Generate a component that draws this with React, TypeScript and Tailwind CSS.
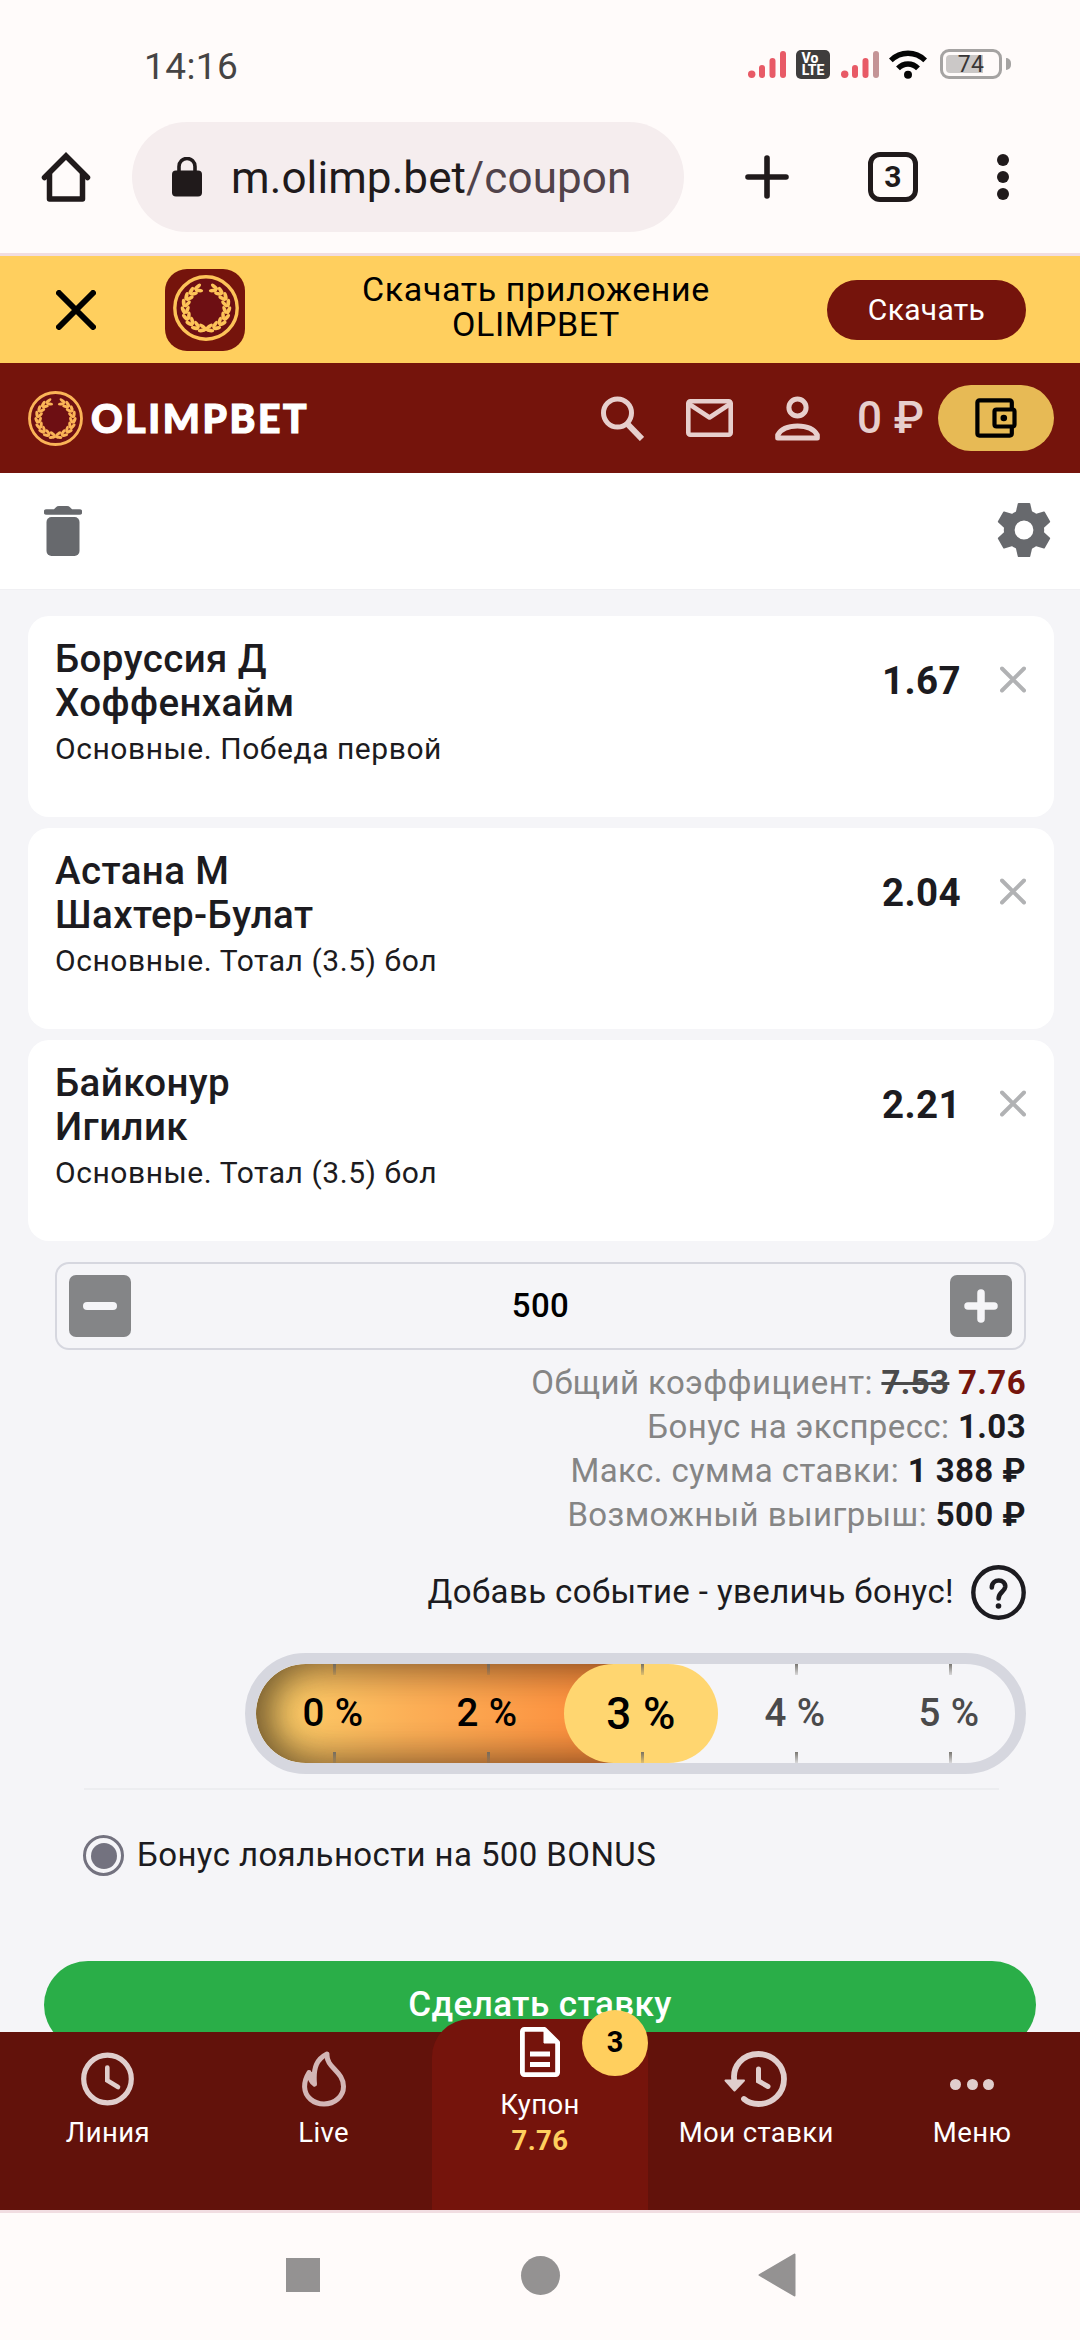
import { useState, type ReactNode } from "react";
import { clsx } from "clsx";

type Bet = { id: number; home: string; away: string; market: string; odds: string };

const BETS: Bet[] = [
    { id: 1, home: "Боруссия Д", away: "Хоффенхайм", market: "Основные. Победа первой", odds: "1.67" },
    { id: 2, home: "Астана М", away: "Шахтер-Булат", market: "Основные. Тотал (3.5) бол", odds: "2.04" },
    { id: 3, home: "Байконур", away: "Игилик", market: "Основные. Тотал (3.5) бол", odds: "2.21" },
];

const BONUS_STEPS = [0, 2, 3, 4, 5];
const ACTIVE_STEP = 2;

const LEAVES = [0, 1, 2, 3, 4, 5, 6, 7, 8];

// Half of the laurel wreath, mirrored for the other side
function Branch() {
    return (
        <g>
            <path d="M36 56.500L30 53.500" stroke="currentColor" strokeWidth="1.2" />
            {LEAVES.map((i) => {
                const deg = 100 + i * 18.5;
                const a = (deg * Math.PI) / 180;
                const ox = 33 + 22.8 * Math.cos(a);
                const oy = 33 + 22.8 * Math.sin(a);
                const ix = 33 + 18.8 * Math.cos(a);
                const iy = 33 + 18.8 * Math.sin(a);
                return (
                    <g key={i}>
                        <ellipse cx={ox} cy={oy} rx="4.3" ry="1.9" transform={`rotate(${deg + 72} ${ox} ${oy})`} />
                        <ellipse cx={ix} cy={iy} rx="4.2" ry="1.8" transform={`rotate(${deg + 118} ${ix} ${iy})`} />
                    </g>
                );
            })}
        </g>
    );
}

function Emblem({ size, color }: { size: number; color: string }) {
    return (
        <svg width={size} height={size} viewBox="0 0 66 66" fill={color} color={color}>
            <circle cx="33" cy="33" r="31.2" fill="#6d0f13" stroke={color} strokeWidth="3.4" />
            <Branch />
            <g transform="matrix(-1 0 0 1 66 0)">
                <Branch />
            </g>
        </svg>
    );
}

function Signal({ weak }: { weak?: boolean }) {
    return (
        <svg width="38" height="27" viewBox="0 0 38 27" fill="#e85a66">
            <circle cx="3.7" cy="23.3" r="3.7" />
            <rect x="11" y="14" width="6" height="13" rx="3" />
            <rect x="21.5" y="7" width="6" height="20" rx="3" />
            <rect x="32" y="0" width="6" height="27" rx="3" fill={weak ? "#c49496" : "#e85a66"} />
        </svg>
    );
}

function StatusBar() {
    return (
        <div className="flex h-[100px] items-center pt-7 pr-[69px] pl-[144px]">
            <span className="pt-[5px] text-[37px] text-[#464444]">14:16</span>
            <div className="ml-auto flex items-center">
                <Signal />
                <div className="ml-[10px] flex h-[29px] w-[34px] flex-col items-center justify-center rounded-[5px] bg-[#3f3d3d] text-[14px] leading-[12px] font-extrabold tracking-[0px] text-white">
                    <span className="-ml-[6px]">Vo</span>
                    <span>LTE</span>
                </div>
                <span className="ml-[11px]">
                    <Signal weak />
                </span>
                <svg className="ml-[10px]" width="38" height="29" viewBox="0 0 38 29" fill="none" stroke="#050505" strokeWidth="5.4">
                    <path d="M1.8 10.4C11.5 0.8 26.5 0.8 36.2 10.4" />
                    <path d="M9 18.4C14.6 12.6 23.4 12.6 29 18.4" />
                    <circle cx="19" cy="24.8" r="4" fill="#050505" stroke="none" />
                </svg>
                <div className="relative ml-[13px] flex h-[30px] w-[62px] items-center justify-center rounded-[9px] border-[3px] border-[#a5a3a2]">
                    <div className="absolute top-[3px] left-[3px] h-[18px] w-[37px] rounded-l-[4px] bg-[#cbc8c7]" />
                    <span className="relative pt-px text-[23px] leading-[24px] text-[#383636]">74</span>
                </div>
                <div className="ml-[4px] h-[12px] w-[5px] rounded-r-full bg-[#a5a3a2]" />
            </div>
        </div>
    );
}

function BrowserBar() {
    return (
        <div className="flex h-[156px] items-center border-b-[3px] border-[#f1dde1] pl-[41px] text-[#201a1b]">
            <svg width="50" height="50" viewBox="0 0 50 50" fill="none" stroke="currentColor" strokeWidth="5.5" strokeLinejoin="round" strokeLinecap="round">
                <path d="M3.5 25.5L25 4L46.5 25.5" strokeLinejoin="miter" />
                <path d="M8.5 22V47H41.5V22" />
            </svg>
            <div className="ml-[41px] flex h-[110px] w-[552px] items-center rounded-full bg-[#f5edee] pl-10">
                <svg width="30" height="40" viewBox="0 0 30 40" fill="currentColor">
                    <path d="M7 16V9.5a8 8 0 0 1 16 0V16" fill="none" stroke="currentColor" strokeWidth="3.6" />
                    <rect x="0" y="13.5" width="30" height="26" rx="4" />
                </svg>
                <span className="ml-[29px] pt-[3px] text-[44px] tracking-[0.1px]">
                    m.olimp.bet<span className="text-[#51434a]">/coupon</span>
                </span>
            </div>
            <svg className="ml-[61px]" width="44" height="44" viewBox="0 0 44 44" stroke="currentColor" strokeWidth="5.6" strokeLinecap="round">
                <path d="M22 3V41M3 22H41" />
            </svg>
            <div className="ml-[79px] flex size-[50px] items-center justify-center rounded-[12px] border-[5.5px] border-current text-[30px] font-bold">
                3
            </div>
            <div className="ml-[79px] flex flex-col gap-[5px]">
                <i className="size-3 rounded-full bg-current" />
                <i className="size-3 rounded-full bg-current" />
                <i className="size-3 rounded-full bg-current" />
            </div>
        </div>
    );
}

function AppBanner() {
    return (
        <div className="flex h-[107px] items-center bg-[#ffcf5e] text-black">
            <svg className="ml-[56px]" width="40" height="40" viewBox="0 0 40 40" stroke="currentColor" strokeWidth="6" strokeLinecap="round">
                <path d="M3 3L37 37M37 3L3 37" />
            </svg>
            <div className="ml-[69px] flex h-[82px] w-[80px] items-center justify-center rounded-[22px] bg-[#75140c] pb-1 pl-[2px]">
                <Emblem size={66} color="#fdc358" />
            </div>
            <div className="ml-[46px] w-[490px] pb-[6px] text-center text-[34px] leading-[35px] tracking-[0.6px]">
                Скачать приложение
                <br />
                OLIMPBET
            </div>
            <button className="ml-[46px] h-[60px] w-[199px] rounded-full bg-[#75140c] text-[30px] tracking-[0.3px] text-white">
                Скачать
            </button>
        </div>
    );
}

function SiteHeader() {
    return (
        <div className="flex h-[110px] items-center bg-[#75140c] pl-[28px] text-[#e7cfcd]">
            <Emblem size={55} color="#fbb457" />
            <svg className="ml-[5px] shrink-0" width="222" height="60" viewBox="0 0 222 60">
                <text
                    x="3"
                    y="44.500"
                    textLength="216"
                    lengthAdjust="spacing"
                    fill="#fff"
                    stroke="#fff"
                    strokeWidth="1.2"
                    className="font-[Lato] text-[39px] font-black"
                >
                    OLIMPBET
                </text>
            </svg>
            <svg className="ml-[291px]" width="43" height="45" viewBox="0 0 43 45" fill="none" stroke="currentColor" strokeWidth="5">
                <circle cx="16.5" cy="17" r="14" />
                <path d="M27 28.5L41 43" strokeWidth="6" />
            </svg>
            <svg className="ml-[42px]" width="47" height="38" viewBox="0 0 47 38" fill="none" stroke="currentColor" strokeWidth="4.6" strokeLinejoin="round">
                <rect x="2.3" y="2.3" width="42.4" height="33.4" rx="2" />
                <path d="M3 5L23.5 18.5L44 5" />
            </svg>
            <svg className="ml-[42px]" width="45" height="46" viewBox="0 0 45 46" fill="none" stroke="currentColor" strokeWidth="5" strokeLinejoin="round">
                <circle cx="22.5" cy="12.5" r="8.6" />
                <path d="M2.7 43V40C6 34 14 31 22.5 31S39 34 42.3 40V43Z" />
            </svg>
            <span className="ml-[37px] text-[44px] font-medium">0 ₽</span>
            <button className="ml-[14px] flex h-[66px] w-[116px] items-center justify-center rounded-full bg-[#e7ba55] text-black">
                <svg width="42" height="40" viewBox="0 0 42 40" fill="none" stroke="currentColor" strokeWidth="4.2" strokeLinejoin="round">
                    <path d="M36.8 11V4.4a2 2 0 0 0-2-2H4.4a2 2 0 0 0-2 2V35.6a2 2 0 0 0 2 2H34.8a2 2 0 0 0 2-2V29" />
                    <rect x="19.5" y="11.5" width="20" height="17" rx="2" />
                    <circle cx="28.8" cy="20" r="3.3" fill="currentColor" stroke="none" />
                </svg>
            </button>
        </div>
    );
}

function CouponToolbar({ onClear }: { onClear: () => void }) {
    return (
        <div className="flex h-[117px] items-center justify-between border-b border-[#f0f0f3] bg-white pr-[29px] pl-[44px] text-[#67696d]">
            <button onClick={onClear}>
                <svg width="38" height="50" viewBox="0 0 38 50" fill="currentColor">
                    <path d="M10 3.2L12 1.2Q13 0 15 0H23Q25 0 26 1.2L28 3.2H35.5a2.7 2.7 0 0 1 0 5.6H2.5a2.7 2.7 0 0 1 0-5.6Z" />
                    <rect x="2.5" y="11" width="33" height="39" rx="5" />
                </svg>
            </button>
            <button className="pb-[2px]">
                <svg width="54" height="54" viewBox="0 0 54 54" fill="currentColor">
                    <circle cx="27" cy="27" r="14.8" fill="none" stroke="currentColor" strokeWidth="10.8" />
                    {[0, 60, 120, 180, 240, 300].map((r) => (
                        <path key={r} d="M20.8 0.6Q21 0 21.6 0H32.4Q33 0 33.2 0.6L35.4 10L18.6 10Z" transform={`rotate(${r} 27 27)`} />
                    ))}
                </svg>
            </button>
        </div>
    );
}

function BetCard({ bet, onRemove }: { bet: Bet; onRemove: () => void }) {
    return (
        <div className="flex h-[201px] items-start rounded-[21px] bg-white pt-[21px] pr-[28px] pl-[27px] text-[#1c1b20]">
            <div>
                <div className="text-[38.5px] leading-[44px] font-medium">{bet.home}</div>
                <div className="text-[38.5px] leading-[44px] font-medium">{bet.away}</div>
                <div className="pt-[4px] text-[30px] leading-[40px] tracking-[0.55px]">{bet.market}</div>
            </div>
            <span className="mt-[22px] ml-auto text-[38.5px] leading-[44px] font-bold">{bet.odds}</span>
            <button className="mt-[29px] ml-[39px] text-[#b1b2b4]" onClick={onRemove}>
                <svg width="26" height="27" viewBox="0 0 26 27" stroke="currentColor" strokeWidth="4" strokeLinecap="round">
                    <path d="M2 2.5L24 24.5M24 2.5L2 24.5" />
                </svg>
            </button>
        </div>
    );
}

function StakeInput({ stake, onChange }: { stake: number; onChange: (v: number) => void }) {
    const btn = "flex size-[62px] items-center justify-center rounded-[7px] bg-[#848587]";
    return (
        <div className="flex h-[88px] items-center justify-between rounded-[14px] border-2 border-[#d6d7df] px-3">
            <button className={btn} onClick={() => onChange(stake - 50)}>
                <i className="h-2 w-[34px] rounded-full bg-[#f5f5f8]" />
            </button>
            <span className="text-[33px] font-medium text-black">{stake}</span>
            <button className={btn} onClick={() => onChange(stake + 50)}>
                <svg width="34" height="34" viewBox="0 0 34 34" stroke="#f5f5f8" strokeWidth="7.5" strokeLinecap="round">
                    <path d="M17 4V30M4 17H30" />
                </svg>
            </button>
        </div>
    );
}

function SummaryRow({ label, children }: { label: string; children: ReactNode }) {
    return (
        <div className="leading-[44px]">
            <span className="text-[#858585]">{label}:</span> <b>{children}</b>
        </div>
    );
}

function BonusScale() {
    return (
        <div className="ml-[190px] flex h-[121px] w-[781px] rounded-full border-[11px] border-[#d6d7df]">
            <div className="relative flex w-full overflow-hidden rounded-full">
                <div className="absolute inset-y-0 left-0 w-[385px] rounded-l-full bg-linear-to-r from-[#ffd06a] from-5% via-[#ffb258] via-40% to-[#ff8636] shadow-[inset_0_0_38px_12px_rgba(30,20,10,0.32),inset_18px_0_34px_-6px_rgba(30,20,10,0.45)]" />
                <div className="absolute inset-y-0 left-[308px] w-[154px] rounded-full bg-[#ffd670]" />
                {BONUS_STEPS.map((step, i) => (
                    <div key={step} className="relative flex w-[154px] shrink-0 flex-col items-center justify-between">
                        <i className="h-[11px] w-[3px] translate-x-px bg-linear-to-b from-[#6b6862]/90 to-[#6b6862]/20" />
                        <span
                            className={clsx(
                                "leading-none font-medium",
                                i === ACTIVE_STEP ? "text-[44px]" : "text-[38.5px]",
                                i <= ACTIVE_STEP ? "text-black" : "text-[#4a4a4b]"
                            )}
                        >
                            {step} %
                        </span>
                        <i className="h-[11px] w-[3px] translate-x-px bg-linear-to-b from-[#6b6862]/90 to-[#6b6862]/20" />
                    </div>
                ))}
            </div>
        </div>
    );
}

function NavItem({ label, children }: { label: string; children: ReactNode }) {
    return (
        <div className="flex w-[216px] flex-col items-center pt-[17px]">
            <div className="flex h-[60px] items-center text-[#e0cecd]">{children}</div>
            <span className="mt-[6px] text-[27.5px] leading-[36px]">{label}</span>
        </div>
    );
}

function BottomNav({ count }: { count: number }) {
    return (
        <div className="relative flex h-[181px] border-b-[3px] border-[#f1dde1] bg-[#62120b] text-white">
            <NavItem label="Линия">
                <svg width="53" height="54" viewBox="0 0 53 54" fill="none" stroke="currentColor" strokeWidth="5.2" strokeLinecap="round">
                    <circle cx="26.5" cy="27" r="23.8" />
                    <path d="M26.3 15.5V28.5L37 35" strokeWidth="4.6" />
                </svg>
            </NavItem>
            <NavItem label="Live">
                <svg width="44" height="56" viewBox="0 0 44 56" fill="none" stroke="#d3b6b6" strokeWidth="5" strokeLinejoin="round">
                    <path d="M7 21.5C3.5 27 2.5 31 2.6 36C3 46 11.5 53 22 53S41.5 45.500 41.500 35.500C41.500 20 24 17 25 3C15 8 11 16 12.500 33C9 31 7.500 27 7 21.500Z" />
                    <path d="M6.500 22L12.500 34V23Z" fill="#d3b6b6" strokeWidth="3" />
                </svg>
            </NavItem>
            <div className="relative -mt-[13px] flex w-[217px] flex-col items-center rounded-t-[38px] bg-[#75140c] pt-[8px]">
                <svg width="40" height="50" viewBox="0 0 40 50" fill="none" stroke="#fff" strokeWidth="4.8" strokeLinejoin="round">
                    <path d="M24.500 2.400H4.400a2 2 0 0 0-2 2V45.600a2 2 0 0 0 2 2H35.600a2 2 0 0 0 2-2V15.500Z" />
                    <path d="M24 2.500V16H37.500Z" fill="#fff" strokeWidth="1" />
                    <path d="M10 27H30M10 37.500H30" strokeWidth="5" />
                </svg>
                <span className="mt-[10px] text-[27.5px] leading-[36px]">Купон</span>
                <span className="text-[27.5px] leading-[36px] font-bold text-[#ffcf5e]">7.76</span>
                <div className="absolute -top-[9px] right-0 flex size-[66px] items-center justify-center rounded-full bg-[#ffcf5e] text-[29px] font-bold text-black">
                    {count}
                </div>
            </div>
            <NavItem label="Мои ставки">
                <svg width="64" height="56" viewBox="0 0 64 56" fill="none" stroke="currentColor" strokeWidth="5.8" strokeLinecap="round">
                    <path d="M10.500 31C7.500 15 19 3 34.500 3C48 3 60 14 60 28S49 53 34.500 53C28.500 53 23.500 51 20 48" />
                    <path d="M1.500 29.500H20L10.500 39.500Z" fill="currentColor" strokeWidth="2" strokeLinejoin="round" />
                    <path d="M34.500 18V30L44 35.500" strokeWidth="5" />
                </svg>
            </NavItem>
            <NavItem label="Меню">
                <div className="mt-[11px] flex gap-[5.500px]">
                    <i className="size-[11px] rounded-full bg-current" />
                    <i className="size-[11px] rounded-full bg-current" />
                    <i className="size-[11px] rounded-full bg-current" />
                </div>
            </NavItem>
        </div>
    );
}

function SystemNav() {
    return (
        <div className="flex h-[127px] items-center bg-[#fffbfa] pb-[3px] pl-[286px]">
            <i className="size-[34px] bg-[#949292]" />
            <i className="ml-[201px] size-[39px] rounded-full bg-[#949292]" />
            <svg className="ml-[198px]" width="38" height="44" viewBox="0 0 38 44" fill="#949292" stroke="#949292" strokeWidth="2" strokeLinejoin="round">
                <path d="M1.500 22L36.500 1.500V42.500Z" />
            </svg>
        </div>
    );
}

export default function App() {
    const [bets, setBets] = useState(BETS);
    const [stake, setStake] = useState(500);

    return (
        <div className="flex h-[2340px] w-[1080px] flex-col overflow-hidden bg-[#fffbfa] font-[Roboto,sans-serif] tracking-[0.4px]">
            <StatusBar />
            <BrowserBar />
            <AppBanner />
            <SiteHeader />
            <CouponToolbar onClear={() => setBets([])} />

            <div className="h-[1442px] overflow-hidden bg-[#f5f5f8] text-[#1c1b20]">
                <div className="flex flex-col gap-[11px] px-[28px] pr-[26px] pt-[26px]">
                    {bets.map((b) => (
                        <BetCard key={b.id} bet={b} onRemove={() => setBets((list) => list.filter((x) => x.id !== b.id))} />
                    ))}
                </div>

                <div className="px-[55px] pt-[21px] pr-[54px]">
                    <StakeInput stake={stake} onChange={setStake} />

                    <div className="mt-[11px] text-right text-[33px]">
                        <SummaryRow label="Общий коэффициент">
                            <s className="text-[#4a4a4b] decoration-[3px]">7.53</s> <span className="text-[#75140c]">7.76</span>
                        </SummaryRow>
                        <SummaryRow label="Бонус на экспресс">1.03</SummaryRow>
                        <SummaryRow label="Макс. сумма ставки">1 388 ₽</SummaryRow>
                        <SummaryRow label="Возможный выигрыш">500 ₽</SummaryRow>
                    </div>

                    <div className="mt-[28px] mb-[33px] flex items-center justify-end gap-[17px] text-[33px] leading-[55px]">
                        <span className="-mt-[2px]">Добавь событие - увеличь бонус!</span>
                        <svg width="55" height="55" viewBox="0 0 55 55" fill="none" stroke="currentColor" strokeWidth="4.400" strokeLinecap="round">
                            <circle cx="27.500" cy="27.500" r="25.200" />
                            <path d="M20.800 22.500C20.800 13 35 13.500 34.200 22C33.600 27 27.800 27 27.600 33.500" strokeWidth="4.600" />
                            <circle cx="27.500" cy="41" r="2.800" fill="currentColor" stroke="none" />
                        </svg>
                    </div>

                    <BonusScale />
                </div>

                <div className="mx-[84px] mt-[14px] mr-[81px] h-[2px] bg-[#ecedf0]" />

                <div className="mt-[45px] ml-[83px] flex items-center text-[33px] leading-[41px]">
                    <div className="mr-[13px] flex size-[41px] items-center justify-center rounded-full border-[3px] border-[#73727f]">
                        <i className="size-[26px] rounded-full bg-[#73727f]" />
                    </div>
                    <span className="-mt-[2px]">Бонус лояльности на 500 BONUS</span>
                </div>

                <button className="mt-[85px] ml-[44px] h-[88px] w-[992px] rounded-full bg-[#2aae48] text-[35px] font-medium text-white">
                    Сделать ставку
                </button>
            </div>

            <BottomNav count={bets.length} />
            <SystemNav />
        </div>
    );
}
